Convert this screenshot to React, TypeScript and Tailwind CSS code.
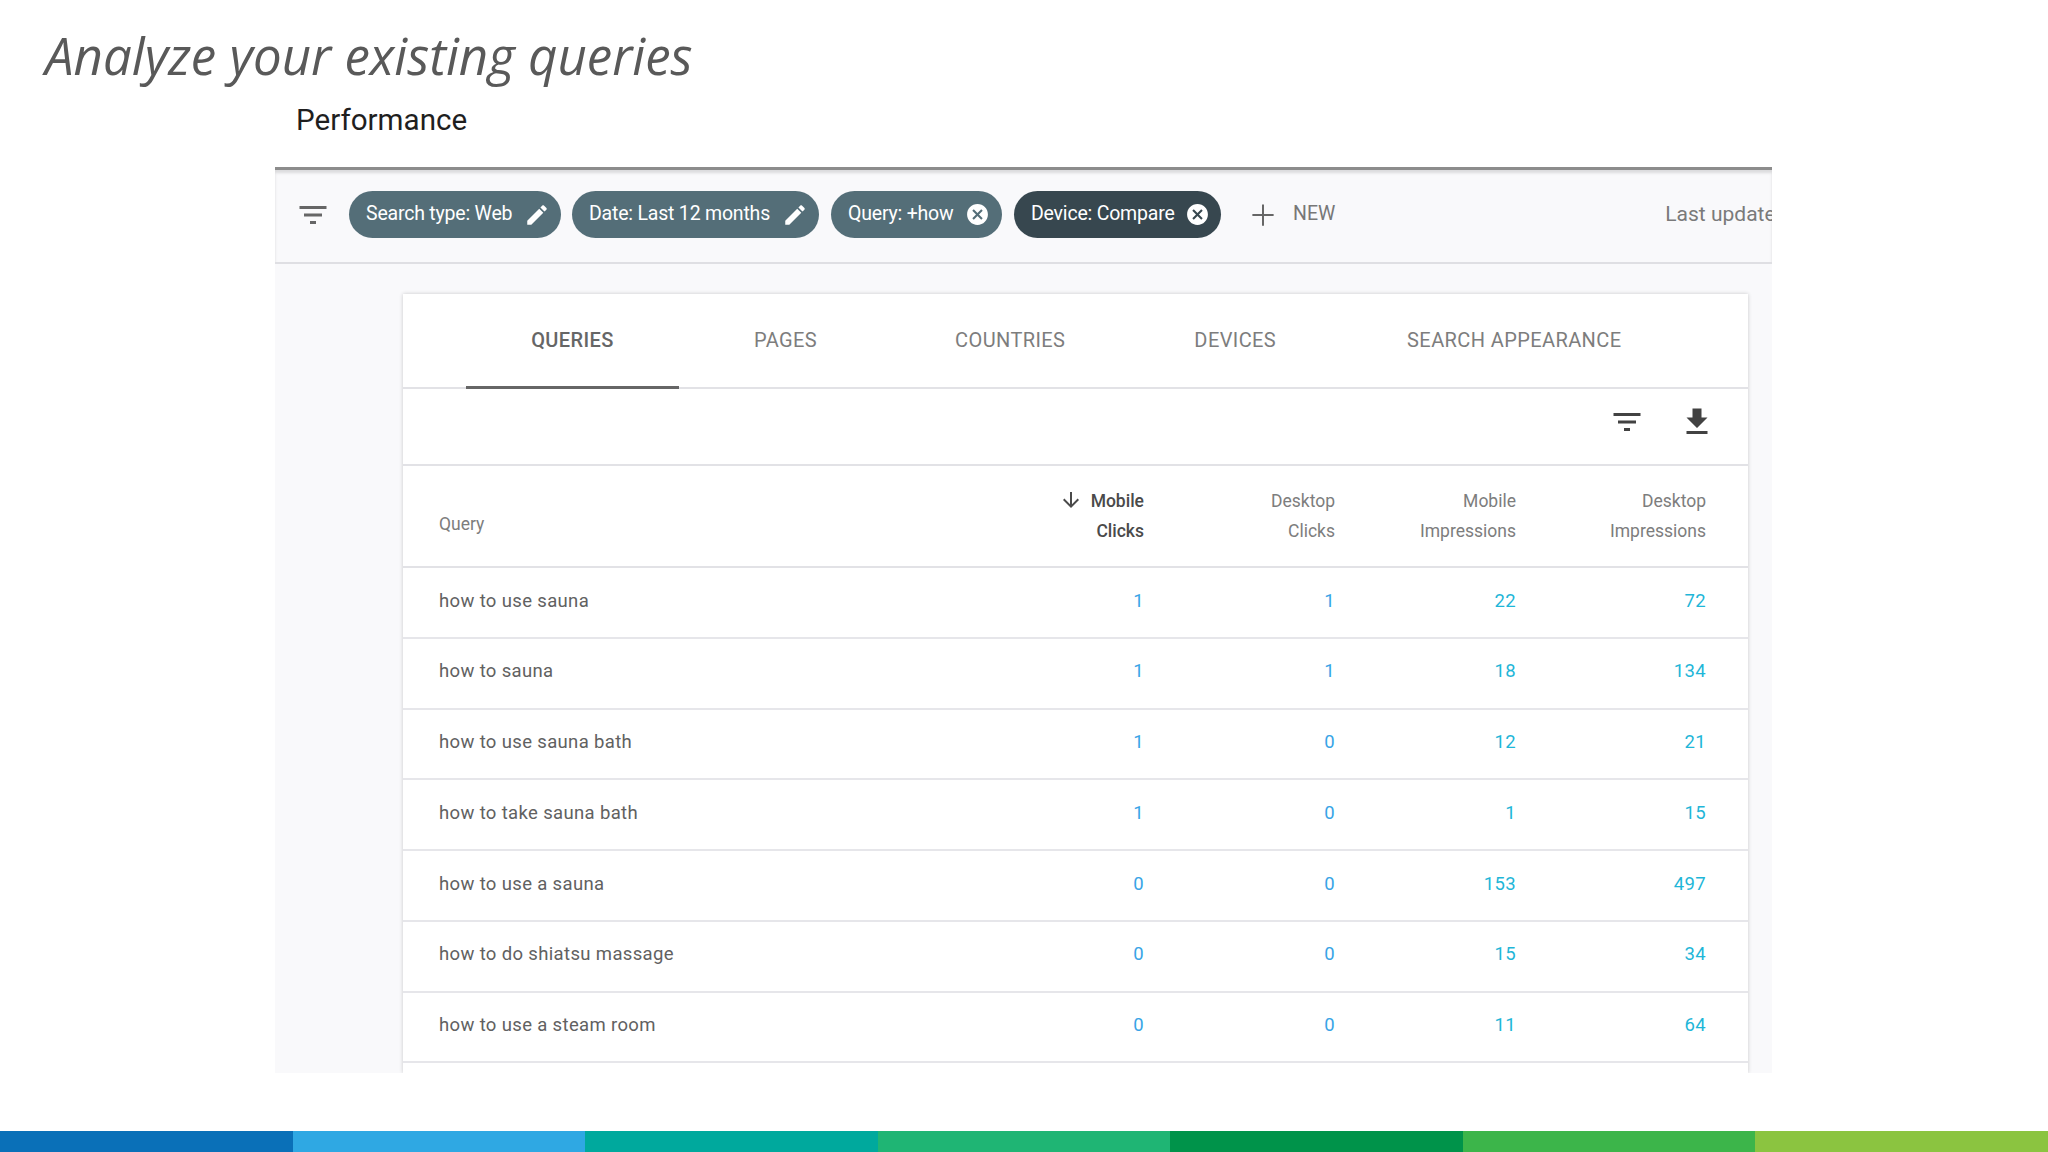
import React from "react";

const Icon = ({ d, className }: { d: string; className: string }) => (
  <svg viewBox="0 0 24 24" fill="currentColor" className={className}>
    <path d={d} />
  </svg>
);

const FILTER = "M10 18h4v-2h-4v2zM3 6v2h18V6H3zm3 7h12v-2H6v2z";
const PENCIL =
  "M3 17.25V21h3.75L17.81 9.94l-3.75-3.75L3 17.25zM20.71 7.04c.39-.39.39-1.02 0-1.41l-2.34-2.34c-.39-.39-1.02-.39-1.41 0l-1.83 1.83 3.75 3.75 1.83-1.83z";
const CANCEL =
  "M12 2C6.47 2 2 6.47 2 12s4.47 10 10 10 10-4.47 10-10S17.53 2 12 2zm5 13.59L15.59 17 12 13.41 8.41 17 7 15.59 10.59 12 7 8.41 8.41 7 12 10.59 15.59 7 17 8.41 13.41 12 17 15.59z";
const DOWNLOAD = "M19 9h-4V3H9v6H5l7 7 7-7zM5 18v2h14v-2H5z";
const ARROW = "M20 12l-1.41-1.41L13 16.17V4h-2v12.17l-5.58-5.59L4 12l8 8 8-8z";

const rows = [
  ["how to use sauna", "1", "1", "22", "72"],
  ["how to sauna", "1", "1", "18", "134"],
  ["how to use sauna bath", "1", "0", "12", "21"],
  ["how to take sauna bath", "1", "0", "1", "15"],
  ["how to use a sauna", "0", "0", "153", "497"],
  ["how to do shiatsu massage", "0", "0", "15", "34"],
  ["how to use a steam room", "0", "0", "11", "64"],
];

const stripes = [
  "bg-[#0a70b8]",
  "bg-[#2fa8e3]",
  "bg-[#00a99d]",
  "bg-[#1fb574]",
  "bg-[#00934a]",
  "bg-[#3cb54a]",
  "bg-[#8bc440]",
];

const Chip = ({
  label,
  icon,
  className,
  iconClass,
}: {
  label: string;
  icon: string;
  className: string;
  iconClass: string;
}) => (
  <div
    className={`h-[47px] shrink-0 whitespace-nowrap rounded-full flex items-center justify-between pl-[17px] text-white text-[19.5px] tracking-[-0.2px] ${className}`}
  >
    <span className="-mt-[1px]">{label}</span>
    <Icon d={icon} className={iconClass} />
  </div>
);

export default function App() {
  return (
    <div className="w-full h-screen bg-white flex flex-col overflow-hidden [font-family:Roboto,sans-serif]">
      <div className="h-[103px] pl-[45px] pt-[20px] text-[51px] leading-[70px] italic text-[#595959] [font-family:'Open_Sans',sans-serif]">
        Analyze your existing queries
      </div>
      <div className="h-[64px] pl-[296px] text-[29.6px] leading-[34px] font-normal text-[#1f1f1f]">
        Performance
      </div>
      <div className="ml-[275px] w-[1497px] h-[906px] bg-[#f9f9fb] overflow-hidden flex flex-col">
        {/* filter bar */}
        <div className="h-[97px] shrink-0 flex items-center whitespace-nowrap pb-[3px] border-b-2 border-[#dfdfe3] border-t-[3px] border-t-[#8c8c8c] shadow-[inset_0_3px_3px_rgba(0,0,0,0.12)] text-[#6f6f6f]">
          <Icon d={FILTER} className="shrink-0 w-[36px] h-[36px] ml-[20px] mr-[18px] text-[#666666]" />
          <Chip
            label="Search type: Web"
            icon={PENCIL}
            className="w-[212px] bg-[#546e78]"
            iconClass="w-[26px] h-[26px] mr-[11px]"
          />
          <Chip
            label="Date: Last 12 months"
            icon={PENCIL}
            className="w-[247px] ml-[11px] bg-[#546e78]"
            iconClass="w-[26px] h-[26px] mr-[11px]"
          />
          <Chip
            label="Query: +how"
            icon={CANCEL}
            className="w-[171px] ml-[12px] bg-[#546e78]"
            iconClass="w-[25px] h-[25px] mr-[12px]"
          />
          <Chip
            label="Device: Compare"
            icon={CANCEL}
            className="w-[207px] ml-[12px] bg-[#37474f]"
            iconClass="w-[25px] h-[25px] mr-[11px]"
          />
          <svg
            viewBox="0 0 24 24"
            fill="none"
            stroke="currentColor"
            strokeWidth="1.4"
            className="shrink-0 w-[34px] h-[34px] ml-[25px] text-[#666666]"
          >
            <path d="M12 4.5v15M4.5 12h15" />
          </svg>
          <span className="ml-[13px] text-[19.5px] -mt-[2px] text-[#777777]">NEW</span>
          <span className="ml-[330px] text-[21px] text-[#7a7a7a]">
            Last updated: 3 hours ago
          </span>
        </div>

        {/* card */}
        <div className="ml-[128px] mr-[24px] mt-[30px] bg-white shadow-[0_0_4px_rgba(0,0,0,0.2)] flex-1">
          <div className="h-[95px] flex border-b-2 border-[#e2e2e6] text-[20px] tracking-[0.4px] text-[#7d7d7d]">
            <div className="ml-[63px] w-[213px] h-[95px] flex items-center justify-center border-b-[3px] border-[#666666] font-medium text-[#666666]">
              QUERIES
            </div>
            <div className="ml-[75px] pb-[2px] flex items-center">PAGES</div>
            <div className="ml-[138px] pb-[2px] flex items-center">COUNTRIES</div>
            <div className="ml-[129px] pb-[2px] flex items-center">DEVICES</div>
            <div className="ml-[131px] pb-[2px] flex items-center">SEARCH APPEARANCE</div>
          </div>
          <div className="h-[77px] flex items-center justify-end border-b-2 border-[#e2e2e6] pr-[33px] pb-[10px] text-[#424242]">
            <Icon d={FILTER} className="w-[36px] h-[36px] mr-[34px]" />
            <Icon d={DOWNLOAD} className="w-[36px] h-[36px]" />
          </div>
          <div className="h-[102px] grid grid-cols-[1fr_191px_181px_190px] items-center border-b-2 border-[#e2e2e6] pl-[36px] pr-[42px] pb-[1px] text-[17.5px] leading-[30px] text-[#7d7d7d] text-right">
            <div className="flex items-center justify-between">
              <span className="mt-[16px]">Query</span>
              <div className="text-[#4a4a4a] font-medium">
                <div className="flex items-center justify-end">
                  <Icon d={ARROW} className="w-[24px] h-[24px] mr-[8px] -mt-[2px]" />
                  Mobile
                </div>
                <div>Clicks</div>
              </div>
            </div>
            <div>
              Desktop
              <br />
              Clicks
            </div>
            <div>
              Mobile
              <br />
              Impressions
            </div>
            <div>
              Desktop
              <br />
              Impressions
            </div>
          </div>
          {rows.map((row) => (
            <div
              key={row[0]}
              className="h-[70.75px] grid grid-cols-[1fr_191px_181px_190px] items-center border-b-2 border-[#e6e6ea] pl-[36px] pr-[42px] pb-[2px] text-[18.5px] tracking-[0.35px] text-right"
            >
              <div className="flex justify-between">
                <span className="text-[#616161]">{row[0]}</span>
                <span className="text-[#38a4e6]">{row[1]}</span>
              </div>
              <div className="text-[#38a4e6]">{row[2]}</div>
              <div className="text-[#1fb6d8]">{row[3]}</div>
              <div className="text-[#1fb6d8]">{row[4]}</div>
            </div>
          ))}
        </div>
      </div>

      {/* colour stripes at the foot of the slide */}
      <div className="mt-auto h-[21px] grid grid-cols-7">
        {stripes.map((s) => (
          <div key={s} className={s} />
        ))}
      </div>
    </div>
  );
}
